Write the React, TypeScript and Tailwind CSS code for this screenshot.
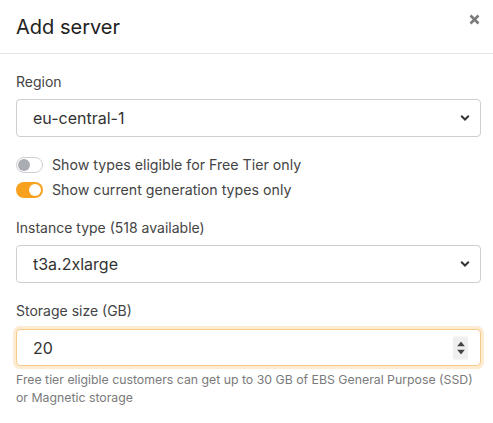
import { useState } from 'react';

function Chevron() {
  return (
    <svg width="10" height="7" viewBox="0 0 10 7" className="pointer-events-none absolute right-[11px] top-1/2 -translate-y-1/2">
      <path d="M1.2 1.3 L5 5 L8.8 1.3" fill="none" stroke="#333" strokeWidth="2" />
    </svg>
  );
}

function SelectBox({ value }: { value: string }) {
  return (
    <div className="relative">
      <select
        defaultValue={value}
        className="h-[38px] w-full appearance-none rounded border border-[#cfcfcf] bg-white pl-4 text-[16px] text-[#333] outline-none"
      >
        <option>{value}</option>
      </select>
      <Chevron />
    </div>
  );
}

function Toggle({ on, label }: { on: boolean; label: string }) {
  return (
    <div className="flex h-[25px] items-center gap-[9px]">
      <div
        className={
          on
            ? 'flex h-4 w-[27px] items-center justify-end rounded-full bg-[#f7a11e] px-[2px]'
            : 'flex h-4 w-[27px] items-center justify-start rounded-full border border-[#cfcfcf] bg-white px-[1px]'
        }
      >
        <div className={on ? 'h-3 w-3 rounded-full bg-white' : 'h-3 w-3 rounded-full bg-[#a9adb3]'} />
      </div>
      <span className="text-[14.2px] text-[#444]">{label}</span>
    </div>
  );
}

export default function App() {
  const [size] = useState('20');
  return (
    <div className="h-[423px] w-[493px] bg-white font-[Inter]">
      <div className="flex h-[54px] items-center justify-between border-b border-[#e4e4e4] pl-4 pr-[13px]">
        <h2 className="text-[20px] text-[#222]">Add server</h2>
        <svg width="11" height="11" viewBox="0 0 11 11" className="mb-[14px]">
          <path d="M1.5 1.5 L9.5 9.5 M9.5 1.5 L1.5 9.5" stroke="#7a7a7a" strokeWidth="2.6" />
        </svg>
      </div>
      <div className="px-4 pr-3 pt-[18px]">
        <label className="mb-[7px] block text-[14px] leading-5 text-[#444]">Region</label>
        <SelectBox value="eu-central-1" />
        <div className="mt-[15px] flex flex-col">
          <Toggle on={false} label="Show types eligible for Free Tier only" />
          <Toggle on={true} label="Show current generation types only" />
        </div>
        <label className="mb-[7px] mt-[16px] block text-[14px] leading-5 text-[#444]">Instance type (518 available)</label>
        <SelectBox value="t3a.2xlarge" />
        <label className="mb-[8px] mt-[18px] block text-[14px] leading-5 text-[#444]">Storage size (GB)</label>
        <div className="relative">
          <input
            readOnly
            value={size}
            className="h-[37px] w-full rounded border border-[#f8c98a] bg-white pl-4 text-[16px] text-[#333] shadow-[0_0_0_3px_#fdebd2] outline-none"
          />
          <div className="absolute right-[13px] top-1/2 flex h-[23px] w-[15px] -translate-y-1/2 flex-col items-center justify-center gap-[3px] bg-[#efefef]">
            <svg width="8" height="5" viewBox="0 0 8 5"><path d="M0 5 L4 0 L8 5 Z" fill="#444" /></svg>
            <svg width="8" height="5" viewBox="0 0 8 5"><path d="M0 0 L4 5 L8 0 Z" fill="#444" /></svg>
          </div>
        </div>
        <p className="mt-[5px] text-[12.3px] leading-[18px] text-[#7a7a7a]">
          Free tier eligible customers can get up to 30 GB of EBS General Purpose (SSD) or Magnetic storage
        </p>
      </div>
    </div>
  );
}
